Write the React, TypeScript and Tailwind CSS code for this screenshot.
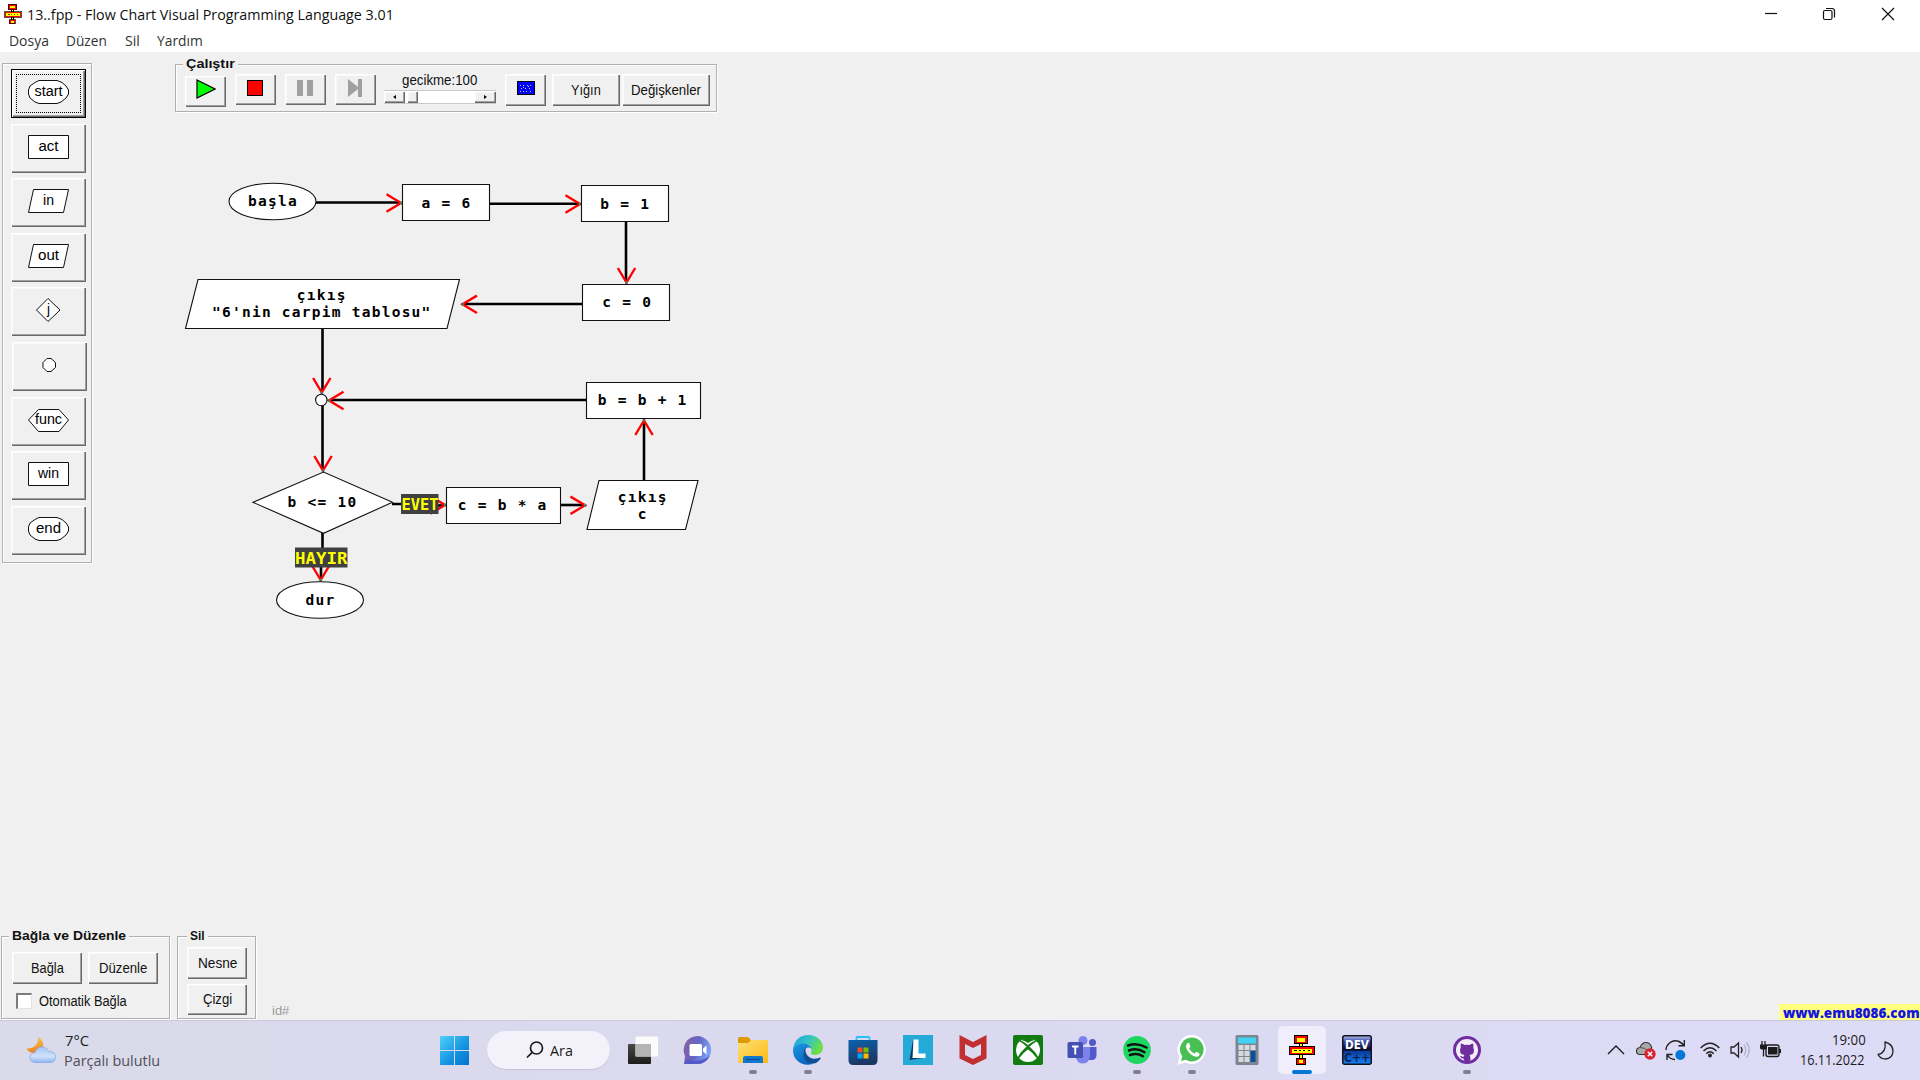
import React, { useLayoutEffect, useRef, useState } from "react";

const UI = "font-['Liberation_Sans',Arial,sans-serif]";
const SEGOE = "font-['Open_Sans','Noto_Sans',sans-serif]";
const RAISED =
  "shadow-[inset_1px_1px_0_#ffffff,inset_-1px_-1px_0_#696969,inset_-2px_-2px_0_#a0a0a0,inset_2px_2px_0_#f8f8f8] bg-[#f0f0f0]";
const ETCHED = "border border-[#b0b0b0] shadow-[1px_1px_0_#ffffff,inset_1px_1px_0_#ffffff]";

/* Text squeezed or stretched to a given width. */
function Fit({ w, className = "", children }: { w: number; className?: string; children: React.ReactNode }) {
  const ref = useRef<HTMLSpanElement>(null);
  const [s, setS] = useState(1);
  useLayoutEffect(() => {
    if (ref.current && ref.current.offsetWidth) setS(w / ref.current.offsetWidth);
  }, [w]);
  return (
    <span className={`block whitespace-nowrap ${className}`} style={{ width: w }}>
      <span ref={ref} className="inline-block origin-left" style={{ transform: `scaleX(${s})` }}>
        {children}
      </span>
    </span>
  );
}

function FlowLogo({ className }: { className: string }) {
  return (
    <svg className={className} viewBox="0 0 26 30" shapeRendering="crispEdges">
      <path d="M12 8v18" stroke="#000" strokeWidth="4" />
      <path d="M12 8v18" stroke="#ff0" strokeWidth="1.500" />
      <rect x="5.500" y=".5" width="13" height="8" fill="#f00" stroke="#000" />
      <rect x="8" y="2.500" width="8" height="4" fill="#ff0" />
      <rect x=".5" y="11.500" width="25" height="8" fill="#f00" stroke="#000" />
      <rect x="3" y="13.500" width="20" height="4" fill="#ff0" />
      <path d="M5 15.500h3m2 0h2m2 0h2m3 0h2" stroke="#000" />
      <rect x="7.500" y="23.500" width="9" height="6" fill="#f00" stroke="#000" />
      <rect x="10" y="25" width="4" height="3" fill="#ff0" />
    </svg>
  );
}

const OVAL = "M28 11.500H46L51 13.500L55 17L57.500 21V25L55 29L50 33L46 34.500H28L24 33L19 29L17.500 25V21L19 17L24 13.500Z";
const PALETTE = [
  { label: "start", d: OVAL, gap: "mb-[6px]", w: 28 },
  { label: "act", d: "M17.500 11.500H57.500V34.500H17.500Z", gap: "mb-[5px]", w: 20 },
  { label: "in", d: "M22.500 11.500H57.500L52.500 34.500H17.500Z", gap: "mb-[6px]", w: 11 },
  { label: "out", d: "M22.500 11.500H57.500L52.500 34.500H17.500Z", gap: "mb-[5px]", w: 21 },
  { label: "j", d: "M37 11.500L49 23L37 34.500L25.500 23Z", gap: "mb-[6px]", w: 3 },
  { label: "", d: "M35 16.500H39L43.500 20.500V25.500L39 29.500H35L31 25.500V20.500Z", gap: "mb-[6px]", w: 0 },
  { label: "func", d: "M27.500 12.500H48L57.500 23L48 34.500H27.500L17.500 23Z", gap: "mb-[5px]", w: 27 },
  { label: "win", d: "M17.500 11.500H57.500V34.500H17.500Z", gap: "mb-[6px]", w: 21 },
  { label: "end", d: OVAL, gap: "", w: 25 },
];

function PaletteBox() {
  return (
    <div className={`ml-[2px] mt-[12px] h-[500px] w-[90px] shrink-0 pl-[8px] pt-[5px] ${ETCHED} ${UI}`}>
      {PALETTE.map((p, i) => (
        <div
          key={i}
          className={`relative h-[49px] w-[75px] ${p.gap} ${RAISED} ${i === 0 ? "border border-black" : ""} ${i === 5 ? "left-[1px]" : ""}`}
        >
          {i === 0 && <div className="absolute left-[4px] right-[4px] top-[4px] bottom-[4px] border border-dotted border-black" />}
          <svg className={`absolute h-[49px] w-[75px] ${i === 0 ? "-left-px -top-px" : "left-0 top-0"}`} viewBox="0 0 75 49">
            <path d={p.d} fill="#fff" stroke="#111" />
            {p.label && (
              <text x={37.5} y={26.5} textAnchor="middle" fontSize="14" textLength={p.w} lengthAdjust="spacingAndGlyphs">
                {p.label}
              </text>
            )}
          </svg>
        </div>
      ))}
    </div>
  );
}

function Btn({ className = "", children }: { className?: string; children?: React.ReactNode }) {
  return <div className={`flex shrink-0 items-center justify-center ${RAISED} ${className}`}>{children}</div>;
}

function Legend({ w, className, children }: { w: number; className: string; children: string }) {
  return (
    <div className={`absolute -top-[10px] h-[17px] bg-[#f0f0f0] px-[3px] text-[13.500px] font-bold leading-[17px] text-[#111] ${className}`}>
      <Fit w={w}>{children}</Fit>
    </div>
  );
}

function RunBox() {
  return (
    <div className={`relative ml-[83px] mt-[13px] flex h-[48px] w-[542px] items-start pl-[9px] pt-[9px] text-[14px] text-[#111] ${ETCHED} ${UI}`}>
      <Legend w={49} className="left-[7px]">Çalıştır</Legend>
      <Btn className="mt-[2px] h-[31px] w-[41px]">
        <svg className="-mt-[5px] h-[20px] w-[20px]" viewBox="0 0 20 20">
          <path d="M1 1L19 10L1 19Z" fill="#0f0" stroke="#000" strokeWidth="1.200" />
        </svg>
      </Btn>
      <Btn className="ml-[9px] h-[31px] w-[41px]">
        <div className="-ml-px -mt-[3px] h-[16px] w-[16px] border border-black bg-[#f00]" />
      </Btn>
      <Btn className="ml-[9px] h-[31px] w-[41px]">
        <div className="-ml-px -mt-[3px] flex h-[16px] w-[16px] justify-between">
          <div className="w-[6px] bg-[#a0a0a0]" />
          <div className="w-[6px] bg-[#a0a0a0]" />
        </div>
      </Btn>
      <Btn className="ml-[9px] h-[31px] w-[41px]">
        <svg className="-mt-[3px] h-[18px] w-[15px]" viewBox="0 0 15 18">
          <path d="M0 0L10 8V0H14V18H10V10L0 18Z" fill="#a0a0a0" />
        </svg>
      </Btn>
      <div className="ml-[8px] mt-[-2px] w-[112px]">
        <div className="h-[18px] pl-[18px] leading-[17px]">
          <Fit w={75}>gecikme:100</Fit>
        </div>
        <div className="flex h-[14px] border-y border-[#c8c8c8] bg-white">
          <Btn className="w-[21px]">
            <div className="border-y-[2.500px] border-r-[3px] border-y-transparent border-r-black" />
          </Btn>
          <Btn className="ml-[2px] w-[11px]" />
          <div className="grow" />
          <Btn className="w-[22px]">
            <div className="border-y-[2.500px] border-l-[3px] border-y-transparent border-l-black" />
          </Btn>
        </div>
      </div>
      <Btn className="ml-[9px] h-[32px] w-[41px]">
        <svg className="-mt-[4px] h-[14px] w-[18px]" viewBox="0 0 18 14" shapeRendering="crispEdges">
          <rect x=".5" y=".5" width="17" height="13" fill="#00f" stroke="#000" />
          <path d="M3 4.500h1m2 0h1m3 0h1m2 0h1M4 7.500h1m3 0h1m3 0h1M3 10.500h1m2 0h1m2 0h1m3 0h1M6 6.500h1m4-1h1" stroke="#cc9" />
        </svg>
      </Btn>
      <Btn className="ml-[6px] h-[32px] w-[68px]">
        <Fit w={30}>Yığın</Fit>
      </Btn>
      <Btn className="ml-[2px] h-[32px] w-[88px]">
        <Fit w={70}>Değişkenler</Fit>
      </Btn>
    </div>
  );
}

const LINES: number[][] = [
  [316, 202.5, 400, 202.5],
  [489, 203.8, 579, 203.8],
  [626, 222, 626, 281],
  [583, 304, 464, 304],
  [322.5, 328, 322.5, 391],
  [587, 400, 330, 400],
  [322.5, 405, 322.5, 469],
  [392, 504, 425, 504],
  [424, 505.5, 443, 505.5],
  [561, 505, 584, 505],
  [644, 480, 644, 422],
  [322.5, 533, 322.5, 552],
  [321, 552, 321, 578],
];
/* tip x, tip y, direction in degrees (0 = right) */
const HEADS: number[][] = [
  [402, 203, 0],
  [581, 204, 0],
  [626.5, 283.5, 90],
  [461.5, 304.3, 180],
  [321.8, 393.5, 90],
  [328, 400.5, 180],
  [323, 471.5, 90],
  [446, 505, 0],
  [586, 505.3, 0],
  [644, 419.5, 270],
  [320.7, 581, 90],
];
const SHAPES = [
  "M402.500 184.500H489.500V220.500H402.500Z",
  "M581.500 185.500H668.500V221.500H581.500Z",
  "M582.500 284.500H669.500V320.500H582.500Z",
  "M198 279.500H459.500L447 328.500H185.500Z",
  "M586.500 382.500H700.500V418.500H586.500Z",
  "M253 502.300L323.500 472L392.500 502.300L323.500 533.300Z",
  "M446.500 487.500H560.500V523.500H446.500Z",
  "M599 480.500H698L685.500 529.500H587Z",
];
/* centre x, baseline, text */
const TEXTS: [number, number, string][] = [
  [272.5, 206, "başla"],
  [446, 207.5, "a = 6"],
  [624.7, 208.5, "b = 1"],
  [626.7, 307.3, "c = 0"],
  [321.3, 300.3, "çıkış"],
  [321.3, 317.3, "\"6'nin carpim tablosu\""],
  [642.2, 404.7, "b = b + 1"],
  [322, 507.3, "b <= 10"],
  [502.2, 510, "c = b * a"],
  [642.3, 501.5, "çıkış"],
  [642.3, 519, "c"],
  [320, 605.3, "dur"],
];

function FlowChart() {
  return (
    <svg className="pointer-events-none absolute -top-[51px] left-0 h-[700px] w-[760px]" viewBox="0 0 760 700">
      {LINES.map(([a, b, c, d], i) => (
        <line key={i} x1={a} y1={b} x2={c} y2={d} stroke="#000" strokeWidth="2.600" />
      ))}
      {HEADS.map(([x, y, r], i) => (
        <g key={i} transform={`translate(${x} ${y}) rotate(${r})`}>
          <path d="M-15.500 -8.700L-1 0L-15.500 8.700" fill="none" stroke="#f00" strokeWidth="2.400" />
          <rect x="-2" y="-1.500" width="2" height="3" fill="#3a3" />
          <rect x="-1" y="-.5" width="1.500" height="1.500" fill="#c0c" />
        </g>
      ))}
      <g fill="#fff" stroke="#111" strokeWidth="1.100">
        <ellipse cx="272.500" cy="201.500" rx="43.500" ry="18.300" />
        <ellipse cx="320" cy="600" rx="43.500" ry="18.300" />
        <circle cx="321.300" cy="400" r="5.700" />
        {SHAPES.map((d) => (
          <path key={d} d={d} />
        ))}
      </g>
      <g className="font-['DejaVu_Sans_Mono',monospace] font-bold" fontSize="14.500" textAnchor="middle">
        {TEXTS.map(([x, y, t], i) => (
          <text key={i} x={x + 0.5} y={y} className="whitespace-pre tracking-[1.25px]">
            {t}
          </text>
        ))}
      </g>
      <g className="font-['DejaVu_Sans_Mono',monospace] font-bold" fontSize="16">
        <rect x="401" y="494" width="37.500" height="20" fill="#404040" />
        <text x="401.500" y="510" fill="#ff0" textLength="37" lengthAdjust="spacingAndGlyphs">EVET</text>
        <rect x="295" y="547.500" width="52.500" height="20" fill="#404040" />
        <text x="295" y="564" fill="#ff0" textLength="52.500" lengthAdjust="spacingAndGlyphs">HAYIR</text>
      </g>
    </svg>
  );
}

function BottomPanels() {
  return (
    <div className={`flex h-[85px] items-start text-[14px] text-[#111] ${UI}`}>
      <div className={`relative ml-px mt-px h-[83px] w-[169px] pl-[10px] pt-[15px] ${ETCHED}`}>
        <Legend w={114} className="left-[7px]">Bağla ve Düzenle</Legend>
        <div className="flex gap-[6px]">
          <Btn className="h-[32px] w-[70px]"><Fit w={33}>Bağla</Fit></Btn>
          <Btn className="h-[32px] w-[70px]"><Fit w={48}>Düzenle</Fit></Btn>
        </div>
        <div className="mt-[9px] flex items-center gap-[7px] pl-[4px]">
          <div className="h-[16px] w-[16px] border-b border-l-2 border-r border-t-2 border-b-[#e3e3e3] border-l-[#7c7c7c] border-r-[#e3e3e3] border-t-[#7c7c7c] bg-white" />
          <Fit w={88} className="leading-[16px]">Otomatik Bağla</Fit>
        </div>
      </div>
      <div className={`relative ml-[7px] mt-px h-[83px] w-[79px] pl-[9px] pt-[10px] ${ETCHED}`}>
        <Legend w={15} className="left-[9px]">Sil</Legend>
        <Btn className="h-[32px] w-[60px]"><Fit w={39}>Nesne</Fit></Btn>
        <Btn className="mt-[5px] h-[31px] w-[60px]"><Fit w={29}>Çizgi</Fit></Btn>
      </div>
      <Fit w={17} className="ml-[16px] mt-[67px] text-[13px] leading-[17px] text-[#9a9a9a]">id#</Fit>
      <div className={`ml-auto mt-[69px] h-[16px] w-[141px] bg-[#ffff80] pl-[4px] text-[14px] font-extrabold leading-[18px] text-[#1414e0] ${SEGOE}`}>
        <Fit w={137}>www.emu8086.com</Fit>
      </div>
    </div>
  );
}

const I = "h-[30px] w-[30px]";
const DOCK: { icon: React.ReactNode; run?: boolean; active?: boolean }[] = [
  {
    icon: (
      <svg className={I} viewBox="0 0 30 30">
        <defs>
          <linearGradient id="tv" x2="0" y2="1"><stop stopColor="#484845" /><stop offset="1" stopColor="#1c1c1b" /></linearGradient>
        </defs>
        <rect x="0" y="9" width="23" height="20" rx="1" fill="url(#tv)" />
        <rect x="7.500" y="1.500" width="22.500" height="20" rx="1" fill="#fbfbfb" />
        <rect x="7.500" y="9" width="15.500" height="12.500" fill="#b4b4b3" />
      </svg>
    ),
  },
  {
    icon: (
      <svg className={I} viewBox="0 0 30 30">
        <defs>
          <linearGradient id="ch" x2="1" y2=".3"><stop stopColor="#8d5f9f" /><stop offset=".55" stopColor="#6366c4" /><stop offset="1" stopColor="#7ba0f0" /></linearGradient>
        </defs>
        <path d="M15 1A14 14 0 1 1 9 28L1 29L2 21A14 14 0 0 1 15 1Z" fill="url(#ch)" />
        <path d="M4 24Q14 29 27 21Q22 29 15 29L1 29Z" fill="#5558c8" />
        <rect x="6.500" y="9" width="12.500" height="12" rx="1.500" fill="#fff" />
        <path d="M20 13.500L23.500 10.500V19.500L20 16.500Z" fill="#fff" />
      </svg>
    ),
  },
  {
    run: true,
    icon: (
      <svg className={I} viewBox="0 0 30 30">
        <defs>
          <linearGradient id="fo" x2="1" y2="1"><stop stopColor="#ffe07a" /><stop offset="1" stopColor="#fbb90f" /></linearGradient>
        </defs>
        <path d="M0 3.500Q0 2 1.500 2H10L13 5V9H0Z" fill="#dd9b04" />
        <path d="M0 8H10L13 5H30V28H0Z" fill="url(#fo)" />
        <path d="M5 28V23Q5 21 7 21H23Q25 21 25 23V28Z" fill="#0f79d0" />
        <path d="M8 24.500H22" stroke="#0a4f94" strokeWidth="1.200" />
      </svg>
    ),
  },
  {
    run: true,
    icon: (
      <svg className={I} viewBox="0 0 30 30">
        <defs>
          <linearGradient id="e1" x2="1" y2=".5"><stop stopColor="#1b9de0" /><stop offset=".5" stopColor="#33c3c7" /><stop offset="1" stopColor="#6ee043" /></linearGradient>
          <linearGradient id="e2" x2=".6" y2="1"><stop stopColor="#1a9be6" /><stop offset="1" stopColor="#0b63bd" /></linearGradient>
        </defs>
        <path d="M.2 13C1.500 5 7.500 0 15 0C24 0 30 6 30 12.500C30 17 26.500 20 22 20C19 20 17.500 19 18 17.500C20 14 17 9 10.500 9C6 9 2 11 .2 13Z" fill="url(#e1)" />
        <path d="M.2 13C2 10.500 6 8.500 10 8.500C15 8.500 18 11.500 18.800 14.500C16 10.500 10.500 13 10.500 18.500C10.500 24 15 28.500 20 29C9 32 -1.500 25 .2 13Z" fill="url(#e2)" />
        <path d="M13 12.500C9.500 15 9 22 13.500 26.500C17 30 22 29 25 26.500C27 25 28 23 27.500 22.500C26.500 22 24 24.500 19.500 23.500C14.500 22.500 11 17 13 12.500Z" fill="#0e4f95" />
      </svg>
    ),
  },
  {
    icon: (
      <svg className={I} viewBox="0 0 30 30">
        <defs>
          <linearGradient id="st" x2=".3" y2="1"><stop stopColor="#0b62b0" /><stop offset="1" stopColor="#1d3763" /></linearGradient>
        </defs>
        <path d="M8.500 7V3Q8.500 2 9.500 2H20.500Q21.500 2 21.500 3V7" fill="none" stroke="#2bc0f5" strokeWidth="1.800" />
        <path d="M.5 5H29.500V25Q29.500 30 25 30H5Q.5 30 .5 25Z" fill="url(#st)" />
        <path d="M9.500 12.500h5v5h-5z" fill="#f25022" /><path d="M15.500 12.500h5v5h-5z" fill="#7fba00" />
        <path d="M9.500 18.500h5v5h-5z" fill="#00a4ef" /><path d="M15.500 18.500h5v5h-5z" fill="#ffb900" />
      </svg>
    ),
  },
  {
    icon: (
      <svg className={I} viewBox="0 0 30 30">
        <rect width="30" height="30" fill="#25aad8" />
        <path d="M10 5L6.500 25L20 23L15 19Z" fill="#0b3768" />
        <path d="M10.500 4.500H15.500V18.500H22.500V23H9.500Z" fill="#fff" />
      </svg>
    ),
  },
  {
    icon: (
      <svg className={I} viewBox="0 0 30 30">
        <path d="M1.500 0L15 7L28.500 0V23.500L15 30L1.500 23.500ZM7 9V20L15 24L23 20V9L15 13Z" fill="#c22f31" fillRule="evenodd" />
      </svg>
    ),
  },
  {
    icon: (
      <svg className={I} viewBox="0 0 30 30">
        <rect width="30" height="30" rx="2" fill="#127c10" />
        <circle cx="15" cy="15" r="12" fill="#fff" />
        <path d="M7.500 5.600Q10 4.500 15 8Q20 4.500 22.500 5.600Q19 2.500 15 2.500Q11 2.500 7.500 5.600Z" fill="#127c10" />
        <path d="M7 6Q13 8 19 15Q24 20 24.500 23Q20 17 15 13.500Q10 17 5.500 23Q6 20 11 15Q17 8 23 6Q18 9 15 12Q11 8 7 6Z" fill="#127c10" stroke="#127c10" strokeWidth="1.300" />
      </svg>
    ),
  },
  {
    icon: (
      <svg className={I} viewBox="0 0 30 30">
        <circle cx="16" cy="5.500" r="4.500" fill="#7b83eb" />
        <circle cx="25.500" cy="7.500" r="3.500" fill="#5059c9" />
        <path d="M20 12H29.500V19.500Q29.500 25 24.500 25H20Z" fill="#5059c9" />
        <path d="M9 12H23V21Q22 28.500 16 28.500Q10.500 28.500 9 23Z" fill="#7b83eb" />
        <rect x=".5" y="7" width="15.500" height="16" rx="1.500" fill="#4550b4" />
        <path d="M5 11.500H11.500M8.250 11.500V19.500" stroke="#fff" strokeWidth="1.900" />
      </svg>
    ),
  },
  {
    run: true,
    icon: (
      <svg className={I} viewBox="0 0 30 30">
        <ellipse cx="15" cy="15" rx="13.800" ry="14" fill="#1ed760" />
        <path d="M6 10.500Q15 7 24.500 12.500M7 15.500Q15 12.500 22.500 17.200M8 20Q15 17.500 21 21.200" fill="none" stroke="#111" strokeWidth="2.500" strokeLinecap="round" />
      </svg>
    ),
  },
  {
    run: true,
    icon: (
      <svg className={I} viewBox="0 0 30 30">
        <path d="M15.500 0A14.500 14.500 0 1 1 8 27.500L.5 30L2.500 22A14.500 14.500 0 0 1 15.500 0Z" fill="#fff" />
        <path d="M15.500 2.500A12 12 0 1 1 8.500 24.800L4 26L5.300 21.500A12 12 0 0 1 15.500 2.500Z" fill="#48c056" />
        <path d="M10 8.500Q11.500 7 12.500 9L13.500 11.500L12 13.500Q14 17 17.500 18.500L19.500 16.800L22.500 18.500Q23 21 20 21.800Q16 22 12 17.500Q7.500 12.500 10 8.500Z" fill="#fff" />
      </svg>
    ),
  },
  {
    icon: (
      <svg className={I} viewBox="0 0 30 30">
        <rect x="3.500" width="23" height="30" rx="1.500" fill="#7b868f" />
        <rect x="6" y="2.500" width="18" height="6" fill="#41d3f5" />
        <path d="M6.500 10h5v5h-5zM12.500 10h5v5h-5zM18.500 10h5v5h-5zM6.500 16h5v5h-5zM12.500 16h5v5h-5zM6.500 22h5v5h-5zM12.500 22h5v5h-5z" fill="#d6d9dd" />
        <path d="M18.500 16h5v11h-5z" fill="#0d4f94" />
      </svg>
    ),
  },
  { active: true, icon: <FlowLogo className="h-[30px] w-[26px]" /> },
  {
    icon: (
      <svg className={`${I} overflow-visible`} viewBox="0 0 30 30">
        <defs>
          <linearGradient id="dv" x2="0" y2="1"><stop stopColor="#b8c4ee" /><stop offset=".2" stopColor="#3a4cae" /><stop offset=".5" stopColor="#04051a" /><stop offset=".55" stopColor="#0a3c9c" /><stop offset="1" stopColor="#1580f8" /></linearGradient>
        </defs>
        <rect x=".75" y=".75" width="28.500" height="28.500" rx="2" fill="url(#dv)" stroke="#10131c" strokeWidth="1.500" />
        <g className="font-['DejaVu_Sans',sans-serif] font-bold">
          <text x="3" y="13.500" fontSize="11.500" fill="#fff" textLength="24" lengthAdjust="spacingAndGlyphs">DEV</text>
          <text x="2" y="26.500" fontSize="12.500" fill="#0a2350" textLength="26" lengthAdjust="spacingAndGlyphs">C++</text>
        </g>
      </svg>
    ),
  },
  { icon: null },
  {
    run: true,
    icon: (
      <svg className={I} viewBox="0 0 30 30">
        <circle cx="15" cy="15" r="14" fill="#6f2da0" />
        <circle cx="15" cy="15" r="11" fill="#f4eefa" />
        <path d="M9 8.500Q11 8.500 12.500 10Q15 9.400 17.500 10Q19 8.500 21 8.500Q21.800 10.500 21.200 12Q24 19 17.500 20Q18.500 21 18.500 25.500Q15 26.800 11.800 25.500V23.500Q9 24 8 21Q10 21 11 22.300L12.500 20Q6 19 8.800 12Q8.200 10.500 9 8.500Z" fill="#6f2da0" />
      </svg>
    ),
  },
];

function Taskbar() {
  return (
    <div className={`flex h-[60px] items-center border-t border-[#c9c8de] bg-linear-to-r from-[#dadaea] via-[#dbd9f0] to-[#dedbf7] pb-px text-[15px] text-[#1b1b1b] ${SEGOE}`}>
      <svg className="ml-[26px] h-[28px] w-[31px] shrink-0" viewBox="0 0 31 28">
        <defs>
          <linearGradient id="mo" x2="0" y2="1"><stop stopColor="#f8c04a" /><stop offset="1" stopColor="#ec8220" /></linearGradient>
          <linearGradient id="cl" x2="0" y2="1"><stop stopColor="#a5c6f5" /><stop offset=".6" stopColor="#cfe1fc" /><stop offset="1" stopColor="#8fb5f0" /></linearGradient>
        </defs>
        <path d="M12 1C19 5 19 13 12 16C8 18 3 17 .5 12.500C8 13 13 8 12 1Z" fill="url(#mo)" />
        <path d="M10 26.500Q4 26.500 4 21.500Q4 17 9 16.500Q11 11 16 11Q21 11 22.500 15.500Q29.500 15.500 29.500 21Q29.500 26.500 24 26.500Z" fill="url(#cl)" stroke="#7da7ea" strokeWidth=".7" />
      </svg>
      <div className="-mt-px ml-[7px] w-[160px]">
        <Fit w={23.5} className="ml-px h-[20px] leading-[20px]">7°C</Fit>
        <Fit w={96} className="h-[20px] leading-[20px] text-[#505058]">Parçalı bulutlu</Fit>
      </div>
      <svg className="ml-[215.500px] h-[29px] w-[29px] shrink-0" viewBox="0 0 29 29">
        <defs>
          <linearGradient id="wn" gradientUnits="userSpaceOnUse" x1="0" y1="0" x2="29" y2="29"><stop stopColor="#4fd0fb" /><stop offset=".6" stopColor="#1292e0" /><stop offset="1" stopColor="#0571d0" /></linearGradient>
        </defs>
        <path d="M0 0H14V14H0ZM15 0H29V14H15ZM0 15H14V29H0ZM15 15H29V29H15Z" fill="url(#wn)" />
      </svg>
      <div className="ml-[18px] flex h-[38px] w-[123px] shrink-0 items-center rounded-full bg-[#f3f2fa] shadow-[0_1px_1px_#c4c3d8]">
        <svg className="ml-[39px] h-[18px] w-[18px]" viewBox="0 0 18 18" fill="none" stroke="#1b1b1b" strokeWidth="1.700">
          <circle cx="10.500" cy="7" r="6" />
          <path d="M6.200 11.300L1 16.500" />
        </svg>
        <Fit w={23} className="ml-[6px]">Ara</Fit>
      </div>
      <div className="ml-[6px] flex">
        {DOCK.map((d, i) => (
          <div key={i} className="flex h-[58px] w-[54.950px] items-center justify-center">
            <div className={`relative flex h-[48px] w-[48px] items-center justify-center rounded-[5px] ${d.active ? "bg-[#f0eefa]" : ""}`}>
              {d.icon}
              {d.run && <div className="absolute bottom-0 h-[4px] w-[8px] rounded-full bg-[#82808e]" />}
              {d.active && <div className="absolute bottom-0 h-[4px] w-[20px] rounded-full bg-[#0478d4]" />}
            </div>
          </div>
        ))}
      </div>
      <div className="ml-auto flex items-center">
        <svg className="h-[12px] w-[18px]" viewBox="0 0 18 12" fill="none" stroke="#1b1b1b" strokeWidth="1.300"><path d="M1 10L9 2L17 10" /></svg>
        <svg className="ml-[11px] h-[20px] w-[20px]" viewBox="0 0 20 20">
          <path d="M4 14.500Q.5 14.500 .5 11Q.5 8 4 7.500Q6 2.500 10 2.500Q14 2.500 15.500 7L16 14.500Z" fill="#aaa" stroke="#333" strokeWidth="1.100" />
          <path d="M4 7.500Q9 7 13 12" stroke="#555" fill="none" />
          <circle cx="14" cy="14" r="5.700" fill="#d92231" />
          <path d="M11.800 11.800L16.200 16.200M16.200 11.800L11.800 16.200" stroke="#fff" strokeWidth="1.500" />
        </svg>
        <svg className="ml-[9px] h-[22px] w-[21px]" viewBox="0 0 21 22" fill="none" stroke="#222" strokeWidth="1.400">
          <path d="M1 11Q1 7 4.500 4Q9 .5 14 2.500Q17 4 19 6.500M19.300 1V6.700H13.500M7.500 15.500H2V21M2 15.500Q5 20.500 10 20.500" />
          <circle cx="15.300" cy="16" r="5" fill="#0478d4" stroke="none" />
        </svg>
        <svg className="ml-[14px] h-[16px] w-[20px]" viewBox="0 0 20 16" fill="none" stroke="#222" strokeWidth="1.500">
          <path d="M.7 6Q10 -3.500 19.300 6M3.500 9Q10 2.500 16.500 9M6.300 11.700Q10 8 13.700 11.700" />
          <circle cx="10" cy="13.500" r="1.900" fill="#222" stroke="none" />
        </svg>
        <svg className="ml-[10px] h-[18px] w-[21px]" viewBox="0 0 21 18" fill="none" stroke="#222" strokeWidth="1.300">
          <path d="M1 6H4L8.500 2V16L4 12H1Z" />
          <path d="M11 6Q13 9 11 12" />
          <path d="M14 3.500Q17.500 9 14 14.500M16.500 1.500Q22 9 16.500 16.500" stroke="#b3b1c4" />
        </svg>
        <svg className="ml-[9px] h-[18px] w-[22px]" viewBox="0 0 22 18">
          <rect x="6" y="4" width="13" height="11.500" rx="2" fill="none" stroke="#1b1b1b" strokeWidth="1.400" />
          <rect x="8" y="6" width="9.500" height="7.500" fill="#1b1b1b" />
          <path d="M20 8V12" stroke="#1b1b1b" strokeWidth="2" />
          <path d="M0 3.500H7V7Q7 8.500 3.500 8.500Q0 8.500 0 7Z" fill="#1b1b1b" />
          <path d="M2 0V4M5 0V4M3.500 8V15.500" stroke="#1b1b1b" strokeWidth="1.300" />
        </svg>
        <div className="-mt-[3px] ml-[18px] w-[65px] text-[15px]">
          <Fit w={33.5} className="ml-auto h-[20px] leading-[20px]">19:00</Fit>
          <Fit w={65} className="h-[20px] leading-[20px]">16.11.2022</Fit>
        </div>
        <svg className="ml-[12px] mr-[26px] h-[19px] w-[17px]" viewBox="0 0 17 19" fill="none" stroke="#222" strokeWidth="1.300">
          <path d="M8 1Q16 3 16 10.500Q15.500 17.500 8.500 18Q3.500 18 1 13.500Q9.500 12 8 1Z" strokeLinejoin="round" />
        </svg>
      </div>
    </div>
  );
}

export default function App() {
  return (
    <div className="flex h-[1080px] w-[1920px] flex-col overflow-hidden bg-[#f0f0f0]">
      <div className={`flex h-[28px] items-center bg-white text-[15px] text-[#111] ${SEGOE}`}>
        <FlowLogo className="ml-[4px] h-[20px] w-[18px]" />
        <Fit w={366.5} className="ml-[5px] leading-[20px]">13..fpp - Flow Chart Visual Programming Language 3.01</Fit>
        <svg className="ml-auto mr-[25px] h-[14px] w-[131px]" viewBox="0 0 131 14" fill="none" stroke="#111" strokeWidth="1.200">
          <path d="M1 6.500H13" />
          <rect x="59.500" y="3.500" width="8.500" height="9" rx="1.500" />
          <path d="M62 1.500H68Q70.500 1.500 70.500 4V10.500" />
          <path d="M118 1L130 13M130 1L118 13" />
        </svg>
      </div>
      <div className={`flex h-[24px] bg-white pl-[8.500px] text-[15px] leading-[25px] text-[#333] ${SEGOE}`}>
        <Fit w={40}>Dosya</Fit>
        <Fit w={41} className="ml-[17px]">Düzen</Fit>
        <Fit w={15} className="ml-[18px]">Sil</Fit>
        <Fit w={46} className="ml-[17px]">Yardım</Fit>
      </div>
      <div className="relative -mt-px flex grow flex-col justify-between">
        <div className="flex items-start">
          <PaletteBox />
          <RunBox />
        </div>
        <FlowChart />
        <BottomPanels />
      </div>
      <Taskbar />
    </div>
  );
}
